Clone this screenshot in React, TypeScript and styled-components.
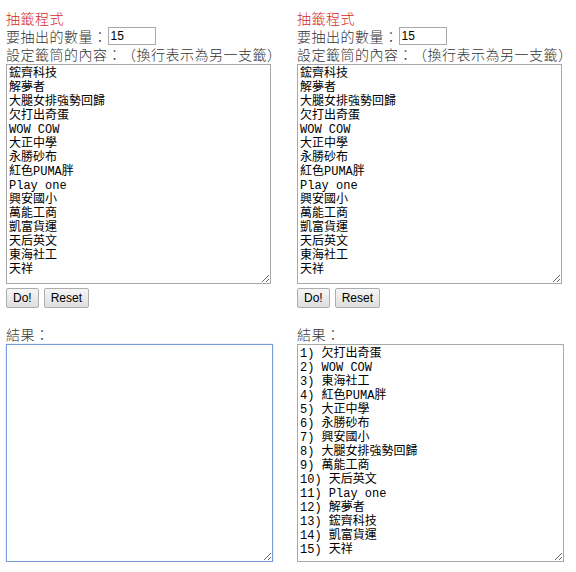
import React from 'react';
import styled, { createGlobalStyle } from 'styled-components';

const items = [
  '鋐齊科技',
  '解夢者',
  '大腿女排強勢回歸',
  '欠打出奇蛋',
  'WOW COW',
  '大正中學',
  '永勝砂布',
  '紅色PUMA胖',
  'Play one',
  '興安國小',
  '萬能工商',
  '凱富貨運',
  '天后英文',
  '東海社工',
  '天祥',
];

const picked = [
  '欠打出奇蛋',
  'WOW COW',
  '東海社工',
  '紅色PUMA胖',
  '大正中學',
  '永勝砂布',
  '興安國小',
  '大腿女排強勢回歸',
  '萬能工商',
  '天后英文',
  'Play one',
  '解夢者',
  '鋐齊科技',
  '凱富貨運',
  '天祥',
];

const GlobalStyle = createGlobalStyle`
  body {
    margin: 0;
    background: #fff;
    font-family: "Noto Sans CJK TC", "Liberation Sans", sans-serif;
    text-spacing-trim: space-all;
  }
`;

const Columns = styled.div`
  display: flex;
  padding: 10px 0 0 6px;
`;

const Column = styled.div`
  flex: 0 0 291px;
  display: flex;
  flex-direction: column;
  font-size: 14px;
  font-weight: 300;
  letter-spacing: 0.5px;
  color: #333;
`;

const Title = styled.div`
  color: #d21f1f;
  line-height: 17px;
`;

const Line = styled.div`
  display: flex;
  align-items: center;
  line-height: 18px;
  white-space: nowrap;
`;

const NumberInput = styled.input`
  box-sizing: border-box;
  width: 48px;
  height: 18px;
  margin: 0;
  padding: 0 2px;
  border: 1px solid #a9a9a9;
  font: 12px "Liberation Sans", Arial, sans-serif;
  letter-spacing: 0;
  color: #000;
`;

const Box = styled.textarea<{ $w: number; $h: number; $focus?: boolean }>`
  box-sizing: border-box;
  display: block;
  width: ${(p) => p.$w}px;
  height: ${(p) => p.$h}px;
  margin: 1px 0 0;
  padding: 2px;
  border: 1px solid ${(p) => (p.$focus ? '#7a9cd6' : '#a9a9a9')};
  box-shadow: ${(p) => (p.$focus ? '0 0 1px #9bb7e6' : 'none')};
  outline: none;
  font: 12px/14px "Liberation Mono", "Noto Sans CJK TC", monospace;
  letter-spacing: 0;
  color: #000;
  overflow: hidden;
`;

const Buttons = styled.div`
  display: flex;
  gap: 5px;
  margin-top: 4px;
`;

const Button = styled.button`
  height: 20px;
  padding: 0 6px;
  border: 1px solid #adadad;
  border-radius: 2px;
  background: linear-gradient(#f6f6f6, #dedede);
  font: 12px "Liberation Sans", Arial, sans-serif;
  letter-spacing: 0;
  color: #000;
`;

const ResultLabel = styled.div`
  margin-top: 17px;
  line-height: 18px;
`;

const Panel = ({ result, focus }: { result: string; focus?: boolean }) => (
  <Column>
    <Title>抽籤程式</Title>
    <Line>
      要抽出的數量：<NumberInput defaultValue="15" />
    </Line>
    <Line>設定籤筒的內容：（換行表示為另一支籤）</Line>
    <Box $w={265} $h={220} defaultValue={items.join('\n')} readOnly />
    <Buttons>
      <Button>Do!</Button>
      <Button>Reset</Button>
    </Buttons>
    <ResultLabel>結果：</ResultLabel>
    <Box $w={267} $h={218} $focus={focus} defaultValue={result} readOnly />
  </Column>
);

export default function App() {
  return (
    <>
      <GlobalStyle />
      <Columns>
        <Panel result="" focus />
        <Panel result={picked.map((t, i) => `${i + 1}) ${t}`).join('\n')} />
      </Columns>
    </>
  );
}
